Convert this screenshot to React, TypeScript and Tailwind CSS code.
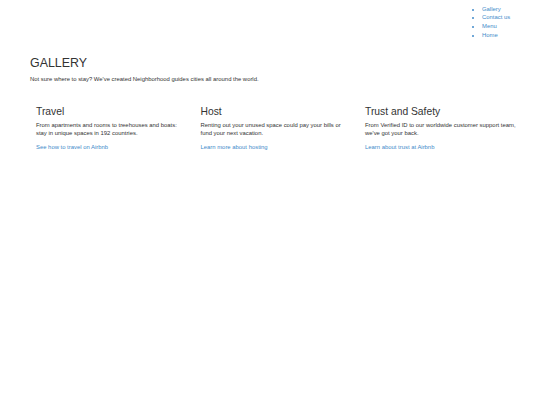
export default function App() {
  const cols = [
    {
      title: "Travel",
      text: "From apartments and rooms to treehouses and boats: stay in unique spaces in 192 countries.",
      link: "See how to travel on Airbnb",
    },
    {
      title: "Host",
      text: "Renting out your unused space could pay your bills or fund your next vacation.",
      link: "Learn more about hosting",
    },
    {
      title: "Trust and Safety",
      text: "From Verified ID to our worldwide customer support team, we've got your back.",
      link: "Learn about trust at Airbnb",
    },
  ];

  return (
    <div className="min-h-[405px] bg-white text-[#333] font-['Liberation_Sans',Arial,sans-serif] text-[5.9px] leading-[8.5px]">
      <nav className="flex justify-end pr-[10px] pt-[4.5px]">
        <ul className="w-[58px] list-disc pl-[10px] text-[#428bca] leading-[8.7px]">
          <li>Gallery</li>
          <li>Contact us</li>
          <li>Menu</li>
          <li>Home</li>
        </ul>
      </nav>
      <div className="pl-[30px] pt-[17px]">
        <h1 className="text-[12.4px] leading-[15px] font-normal">GALLERY</h1>
        <p className="mt-[4px]">
          Not sure where to stay? We've created Neighborhood guides cities all around the world.
        </p>
        <div className="mt-[21px] grid w-[493.5px] grid-cols-3">
          {cols.map((c) => (
            <div key={c.title} className="px-[6px]">
              <h2 className="text-[10.3px] leading-[13px] font-normal">{c.title}</h2>
              <p className="mt-[3px]">{c.text}</p>
              <a className="mt-[5px] block text-[#428bca]">{c.link}</a>
            </div>
          ))}
        </div>
      </div>
    </div>
  );
}
